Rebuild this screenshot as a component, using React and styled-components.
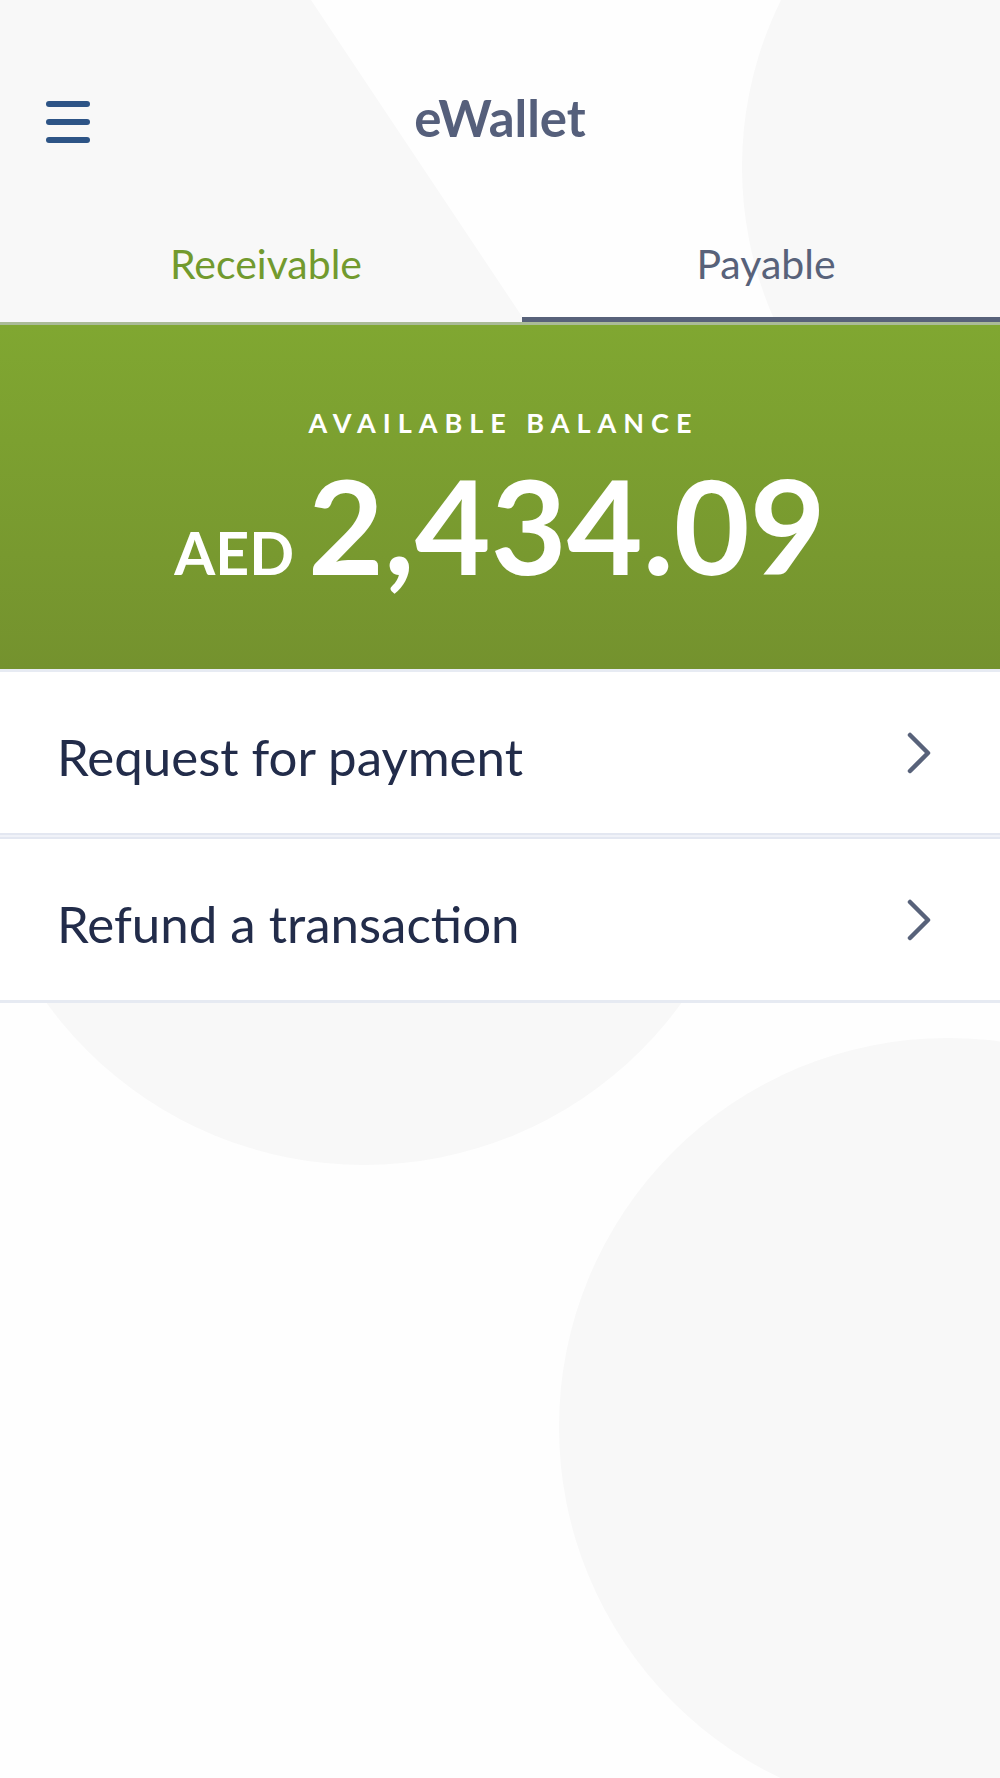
import React from "react";
import styled, { createGlobalStyle } from "styled-components";

const GlobalStyle = createGlobalStyle`
  html, body {
    margin: 0;
    padding: 0;
    background: #fefefe;
  }
  body {
    font-family: Lato, "Open Sans", "Liberation Sans", sans-serif;
    -webkit-font-smoothing: antialiased;
  }
  * { box-sizing: border-box; }
`;

const Page = styled.div`
  position: relative;
  width: 100%;
  min-height: 1778px;
  overflow: hidden;
  background: #fefefe;
`;

const Backdrop = styled.svg`
  position: absolute;
  top: 0;
  left: 0;
  width: 1000px;
  height: 1778px;
  z-index: 0;
  pointer-events: none;
`;

const Content = styled.div`
  position: relative;
  z-index: 1;
`;

const TopBar = styled.header`
  display: grid;
  grid-template-columns: 1fr auto 1fr;
  align-items: start;
  height: 200px;
  padding: 92px 46px 0;
`;

const MenuButton = styled.button`
  margin-top: 9px;
  width: 44px;
  height: 42px;
  padding: 0;
  border: 0;
  background: none;
  display: flex;
  flex-direction: column;
  justify-content: space-between;
  justify-self: start;
  cursor: pointer;
`;

const MenuBar = styled.span`
  display: block;
  width: 44px;
  height: 6px;
  border-radius: 3px;
  background: #2d5486;
`;

const Title = styled.h1`
  margin: 0;
  font-size: 51px;
  line-height: 51px;
  font-weight: 700;
  color: #555f7b;
`;

const TabBar = styled.nav`
  display: flex;
  border-bottom: 3px solid #aabb97;
`;

const Tab = styled.div`
  flex: ${(p) => (p.$first ? "0 0 522px" : "1 1 auto")};
  padding: 43px 0 33px 10px;
  text-align: center;
  font-size: 41px;
  line-height: 41px;
  font-weight: 400;
  color: ${(p) => p.$color};
  border-bottom: 5px solid ${(p) => (p.$underline ? "#58627a" : "transparent")};
`;

const Banner = styled.section`
  height: 344px;
  padding-top: 84px;
  background: linear-gradient(180deg, #80a731 0%, #74922e 100%);
  color: #ffffff;
  text-align: center;
`;

const BalanceLabel = styled.div`
  font-size: 27px;
  line-height: 27px;
  font-weight: 700;
  letter-spacing: 7px;
  margin-right: -7px;
`;

const AmountRow = styled.div`
  display: flex;
  justify-content: center;
  align-items: baseline;
  gap: 14px;
  margin-top: 25px;
`;

const Currency = styled.span`
  font-size: 59px;
  line-height: 1;
  font-weight: 700;
`;

const Value = styled.span`
  font-size: 131px;
  line-height: 128px;
  font-weight: 700;
`;

const List = styled.div`
  border-top: 3px solid #e7ebf3;
  border-bottom: 3px solid #e6eaf2;
  background: #ffffff;
`;

const Row = styled.div`
  height: 161px;
  display: flex;
  align-items: center;
  justify-content: space-between;
  padding: 0 69px 0 57px;
  background: #ffffff;
  cursor: pointer;
`;

const RowLabel = styled.span`
  padding-top: 7px;
  font-size: 51px;
  line-height: 1;
  font-weight: 400;
  color: #222c4a;
`;

const Divider = styled.div`
  height: 6px;
  background: #f0f2f8;
  border-top: 2px solid #e3e7f1;
  border-bottom: 2px solid #e3e7f1;
`;

const Chevron = () => (
  <svg width="24" height="42" viewBox="0 0 24 42" fill="none">
    <path
      d="M3 3 L21 21 L3 39"
      stroke="#58627a"
      strokeWidth="4.5"
      strokeLinecap="round"
      strokeLinejoin="round"
    />
  </svg>
);

const rows = ["Request for payment", "Refund a transaction"];

export default function App() {
  return (
    <Page>
      <GlobalStyle />
      <Backdrop viewBox="0 0 1000 1778" aria-hidden="true">
        <polygon points="0,0 311,0 523,318 523,330 0,330" fill="#f8f8f8" />
        <circle cx="1119" cy="167" r="377" fill="#f8f8f8" />
        <circle cx="364" cy="773" r="392" fill="#f8f8f8" />
        <circle cx="948" cy="1427" r="389" fill="#f8f8f8" />
      </Backdrop>
      <Content>
        <TopBar>
          <MenuButton aria-label="Menu">
            <MenuBar />
            <MenuBar />
            <MenuBar />
          </MenuButton>
          <Title>eWallet</Title>
          <span />
        </TopBar>
        <TabBar>
          <Tab $first $color="#729a2e">Receivable</Tab>
          <Tab $underline $color="#58627a">Payable</Tab>
        </TabBar>
        <Banner>
          <BalanceLabel>AVAILABLE BALANCE</BalanceLabel>
          <AmountRow>
            <Currency>AED</Currency>
            <Value>2,434.09</Value>
          </AmountRow>
        </Banner>
        <List>
          {rows.map((label, i) => (
            <React.Fragment key={label}>
              {i > 0 && <Divider />}
              <Row>
                <RowLabel>{label}</RowLabel>
                <Chevron />
              </Row>
            </React.Fragment>
          ))}
        </List>
      </Content>
    </Page>
  );
}
